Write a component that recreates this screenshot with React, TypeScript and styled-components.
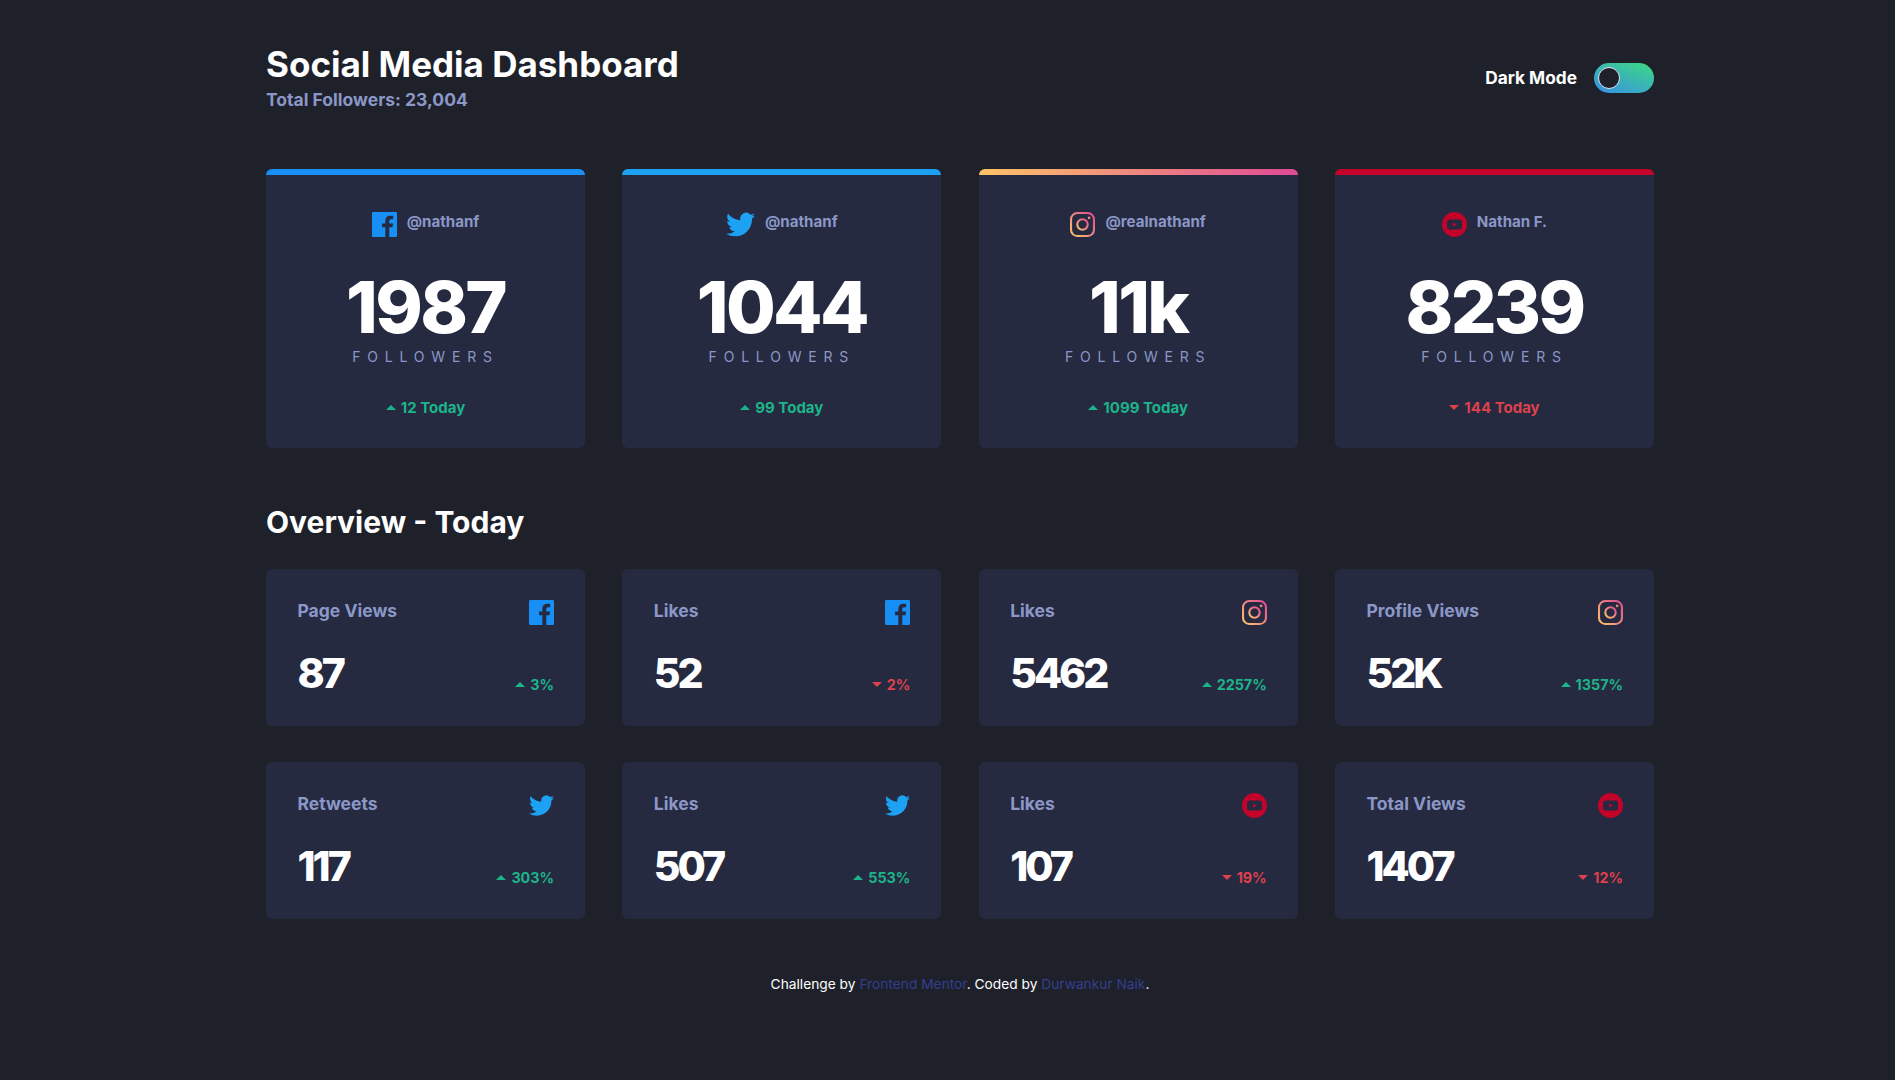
import React from 'react';
import styled, { createGlobalStyle } from 'styled-components';

const Global = createGlobalStyle`
  html, body { margin: 0; padding: 0; background: #1e202a; }
  body { font-family: Inter, "Liberation Sans", sans-serif; color: #fff; }
  * { box-sizing: border-box; }
  a { color: #333f8e; text-decoration: none; }
`;

type Network = 'fb' | 'tw' | 'ig' | 'yt';

const CARD = '#252a41';

function NetIcon({ net, size }: { net: Network; size: number }) {
  if (net === 'fb')
    return (
      <svg width={size} height={size} viewBox="0 0 24 24">
        <rect width="24" height="24" rx="1.300" fill="#178ff5" />
        <path fill={CARD} d="M16.600 24v-9.300h3.100l.5-3.600h-3.600V8.800c0-1 .3-1.800 1.800-1.800h1.900V3.800c-.3 0-1.500-.1-2.800-.1-2.800 0-4.700 1.700-4.700 4.800v2.600H9.700v3.600h3.100V24z" />
      </svg>
    );
  if (net === 'tw')
    return (
      <svg width={size} height={size} viewBox="0 0 24 24">
        <path fill="#1da1f2" d="M24 4.600c-.9.400-1.800.7-2.800.8 1-.6 1.800-1.600 2.200-2.700-1 .6-2 1-3.100 1.200a4.900 4.900 0 0 0-8.400 4.500C7.700 8.200 4.100 6.200 1.700 3.200a4.900 4.900 0 0 0 1.500 6.600c-.8 0-1.600-.2-2.200-.6v.1c0 2.400 1.700 4.400 3.900 4.800-.7.200-1.500.2-2.200.1.600 2 2.400 3.400 4.600 3.400A9.900 9.900 0 0 1 0 19.600 13.900 13.900 0 0 0 7.500 21.800c9.100 0 14.300-7.700 14-14.600 1-.7 1.800-1.600 2.500-2.600z" />
      </svg>
    );
  if (net === 'ig')
    return (
      <svg width={size} height={size} viewBox="0 0 24 24">
        <defs>
          <linearGradient id="igStroke" x1="0" y1="1" x2="1" y2="0">
            <stop offset="0" stopColor="#fdc468" />
            <stop offset="1" stopColor="#df4996" />
          </linearGradient>
        </defs>
        <rect x="1" y="1" width="22" height="22" rx="6" fill="none" stroke="url(#igStroke)" strokeWidth="2" />
        <circle cx="12" cy="12" r="5" fill="none" stroke="url(#igStroke)" strokeWidth="2" />
        <circle cx="18.400" cy="5.600" r="1.300" fill="url(#igStroke)" />
      </svg>
    );
  return (
    <svg width={size} height={size} viewBox="0 0 24 24">
      <circle cx="12" cy="12" r="12" fill="#c4032b" />
      <rect x="4.800" y="7.200" width="14.400" height="9.600" rx="2.600" fill={CARD} />
      <path fill="#c4032b" d="M10.600 9.900l3.600 2.100-3.600 2.100z" />
    </svg>
  );
}

const Page = styled.div`
  width: 1388px;
  margin-left: 266px;
  padding-top: 42px;
  height: 1080px;
`;

const Header = styled.header`
  display: flex;
  justify-content: space-between;
  align-items: center;
  margin-bottom: 58px;
`;

const Title = styled.h1`
  margin: 0;
  font-size: 35px;
  line-height: 44px;
  font-weight: 700;
`;

const Total = styled.p`
  margin: 3px 0 0;
  font-size: 17.500px;
  line-height: 22px;
  font-weight: 700;
  color: #8b97c6;
`;

const ModeBox = styled.div`
  display: flex;
  align-items: center;
  gap: 17px;
  margin-top: 3px;
  font-size: 17.300px;
  font-weight: 700;
`;

const ModeLabel = styled.span`
  margin-bottom: 2px;
`;

const Toggle = styled.div`
  position: relative;
  width: 60px;
  height: 30px;
  border-radius: 15px;
  background: linear-gradient(20deg, #378fe6, #3eda82);
`;

const Knob = styled.span`
  position: absolute;
  left: 4px;
  top: 4px;
  width: 22px;
  height: 22px;
  border-radius: 50%;
  background: #1e202a;
  border: 1px solid #dfe3f2;
`;

const Grid = styled.div`
  display: grid;
  grid-template-columns: repeat(4, 319px);
  justify-content: space-between;
`;

const FollowerCard = styled.article<{ $accent: string }>`
  height: 279px;
  background: ${CARD};
  border-radius: 6px;
  overflow: hidden;
  display: flex;
  flex-direction: column;
  align-items: center;
  &::before {
    content: '';
    align-self: stretch;
    height: 6px;
    background: ${(p) => p.$accent};
  }
`;

const Handle = styled.div`
  margin-top: 37px;
  height: 25px;
  display: flex;
  align-items: center;
  gap: 10px;
  font-size: 15.100px;
  font-weight: 700;
  color: #8b97c6;
  & > span { position: relative; top: -3px; }
`;

const Count = styled.div`
  margin-top: 26px;
  font-size: 72px;
  line-height: 87px;
  font-weight: 800;
  letter-spacing: -2.700px;
`;

const Unit = styled.div`
  margin-top: -2px;
  font-size: 14px;
  line-height: 17px;
  letter-spacing: 6.800px;
  color: #8b97c6;
`;

const Trend = styled.div<{ $up: boolean }>`
  display: flex;
  align-items: center;
  gap: 5px;
  font-weight: 700;
  color: ${(p) => (p.$up ? '#1db489' : '#dc414c')};
`;

const FollowerTrend = styled(Trend)`
  margin-top: 32.500px;
  font-size: 15px;
`;

const Arrow = styled.i<{ $up: boolean }>`
  width: 0;
  height: 0;
  border-left: 5px solid transparent;
  border-right: 5px solid transparent;
  ${(p) => (p.$up ? 'border-bottom: 5px solid #1db489;' : 'border-top: 5px solid #dc414c;')}
`;

const OverviewTitle = styled.h2`
  margin: 56px 0 29px;
  font-size: 30px;
  line-height: 36px;
  font-weight: 700;
`;

const OverviewGrid = styled(Grid)`
  row-gap: 36.500px;
`;

const StatCard = styled.article`
  height: 156.500px;
  background: ${CARD};
  border-radius: 6px;
  padding: 31px 31px 0 31.500px;
`;

const StatRow = styled.div`
  display: flex;
  justify-content: space-between;
  align-items: flex-start;
`;

const StatLabel = styled.span`
  font-size: 17.500px;
  line-height: 22px;
  font-weight: 700;
  color: #8b97c6;
`;

const StatBottom = styled(StatRow)`
  margin-top: 23px;
  align-items: flex-end;
`;

const StatValue = styled.span`
  font-size: 41px;
  line-height: 51px;
  font-weight: 800;
  letter-spacing: -3px;
`;

const StatTrend = styled(Trend)`
  font-size: 14.300px;
  padding-bottom: 6.500px;
`;

const Footer = styled.footer`
  margin-top: 57px;
  text-align: center;
  font-size: 13.750px;
  line-height: 17px;
`;

const followers: { net: Network; handle: string; count: string; delta: string; up: boolean; accent: string }[] = [
  { net: 'fb', handle: '@nathanf', count: '1987', delta: '12 Today', up: true, accent: '#178ff5' },
  { net: 'tw', handle: '@nathanf', count: '1044', delta: '99 Today', up: true, accent: '#1da1f2' },
  { net: 'ig', handle: '@realnathanf', count: '11k', delta: '1099 Today', up: true, accent: 'linear-gradient(90deg, #fdc468, #df4996)' },
  { net: 'yt', handle: 'Nathan F.', count: '8239', delta: '144 Today', up: false, accent: '#c4032b' },
];

const stats: { net: Network; label: string; value: string; delta: string; up: boolean }[] = [
  { net: 'fb', label: 'Page Views', value: '87', delta: '3%', up: true },
  { net: 'fb', label: 'Likes', value: '52', delta: '2%', up: false },
  { net: 'ig', label: 'Likes', value: '5462', delta: '2257%', up: true },
  { net: 'ig', label: 'Profile Views', value: '52K', delta: '1357%', up: true },
  { net: 'tw', label: 'Retweets', value: '117', delta: '303%', up: true },
  { net: 'tw', label: 'Likes', value: '507', delta: '553%', up: true },
  { net: 'yt', label: 'Likes', value: '107', delta: '19%', up: false },
  { net: 'yt', label: 'Total Views', value: '1407', delta: '12%', up: false },
];

export default function App() {
  return (
    <Page>
      <Global />
      <Header>
        <div>
          <Title>Social Media Dashboard</Title>
          <Total>Total Followers: 23,004</Total>
        </div>
        <ModeBox>
          <ModeLabel>Dark Mode</ModeLabel>
          <Toggle>
            <Knob />
          </Toggle>
        </ModeBox>
      </Header>
      <Grid>
        {followers.map((f) => (
          <FollowerCard key={f.count} $accent={f.accent}>
            <Handle>
              <NetIcon net={f.net} size={f.net === 'tw' ? 29 : 25} />
              <span>{f.handle}</span>
            </Handle>
            <Count>{f.count}</Count>
            <Unit>FOLLOWERS</Unit>
            <FollowerTrend $up={f.up}>
              <Arrow $up={f.up} />
              {f.delta}
            </FollowerTrend>
          </FollowerCard>
        ))}
      </Grid>
      <OverviewTitle>Overview - Today</OverviewTitle>
      <OverviewGrid>
        {stats.map((s) => (
          <StatCard key={s.label + s.value}>
            <StatRow>
              <StatLabel>{s.label}</StatLabel>
              <NetIcon net={s.net} size={25} />
            </StatRow>
            <StatBottom>
              <StatValue>{s.value}</StatValue>
              <StatTrend $up={s.up}>
                <Arrow $up={s.up} />
                {s.delta}
              </StatTrend>
            </StatBottom>
          </StatCard>
        ))}
      </OverviewGrid>
      <Footer>
        Challenge by <a href="#a">Frontend Mentor</a>. Coded by <a href="#b">Durwankur Naik</a>.
      </Footer>
    </Page>
  );
}
